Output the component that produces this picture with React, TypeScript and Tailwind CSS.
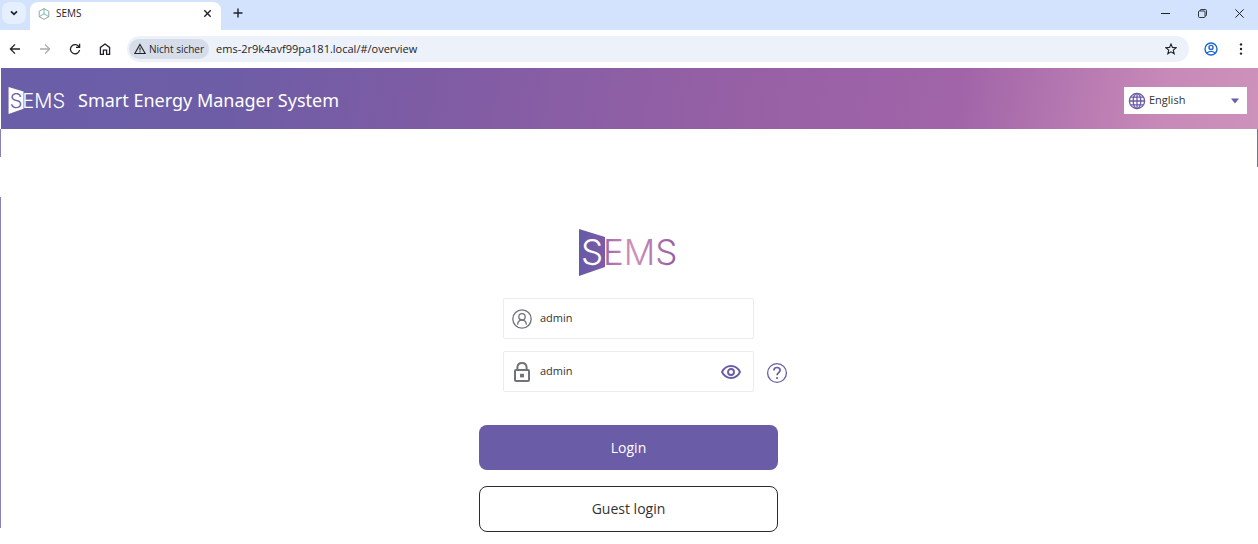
import React, { useState } from 'react'

interface ILogoProps {
  className?: string,
  id: string,
  light?: boolean
}

// SEMS wordmark, the first letter sits on a slanted panel
const SemsLogo = ({ className, id, light }: ILogoProps) => {
  return (
    <svg className={className} viewBox="0 0 99 47" overflow="visible" role="img" aria-label="SEMS logo">
      <defs>
        <linearGradient id={`${id}-text`} gradientUnits="userSpaceOnUse" x1="26" y1="0" x2="100" y2="0">
          <stop offset="0" stopColor="#a365a9" />
          <stop offset="0.38" stopColor="#cf93bb" />
          <stop offset="1" stopColor="#8f57a1" />
        </linearGradient>
        <linearGradient id={`${id}-panel`} x1="0" y1="0" x2="1" y2="0">
          <stop offset="0" stopColor="#655aa7" />
          <stop offset="1" stopColor="#7c5ba6" />
        </linearGradient>
      </defs>
      <path d="M0 0 L26 8 V38 L0 47 Z" fill={light ? '#fff' : `url(#${id}-panel)`} />
      <text x="2" y="36" fontFamily="Inter, Liberation Sans, sans-serif" fontWeight="300" fontSize="35" fill={light ? '#6d5ca6' : '#fff'}>S</text>
      <text x="24" y="36" fontFamily="Inter, Liberation Sans, sans-serif" fontWeight="300" fontSize="35" fill={light ? '#fff' : `url(#${id}-text)`}>EMS</text>
    </svg>
  )
}

const BrowserBar = () => {
  return (
    <div className="text-[#1f2328]">
      {/* Tab strip */}
      <div className="flex h-[30px] bg-[#d3e3fd]">
        <button aria-label="Search tabs" className="flex items-center justify-center w-6 h-[22px] mt-[2px] ml-[2px] rounded-lg bg-[#e6effd]">
          <svg className="w-2 h-2" viewBox="0 0 8 8" fill="none" stroke="currentColor" strokeWidth="1.7">
            <path d="M1 2.4 L4 5.4 L7 2.4" />
          </svg>
        </button>
        <div className="flex items-center w-[191px] h-7 mt-[2px] ml-1 pl-2 pr-[9px] pb-[5px] rounded-t-lg bg-white">
          <svg className="w-3 h-3 shrink-0" viewBox="0 0 12 12" fill="none" strokeWidth="0.9">
            <path stroke="#8b979b" d="M6 0.6 L10.8 3.3 V8.7 L6 11.4 L1.2 8.7 V3.3 Z" />
            <path stroke="#63b79b" d="M6 0.6 V5.8 L1.2 8.7 M6 5.8 L10.8 8.7" />
          </svg>
          <span className="ml-[6px] text-[10px]">SEMS</span>
          <button aria-label="Close tab" className="ml-auto">
            <svg className="w-[9px] h-[9px]" viewBox="0 0 9 9" stroke="currentColor" strokeWidth="1.4">
              <path d="M1.3 1.3 L7.7 7.7 M7.7 1.3 L1.3 7.7" />
            </svg>
          </button>
        </div>
        <button aria-label="New tab" className="ml-3 pb-1">
          <svg className="w-[10px] h-[10px]" viewBox="0 0 10 10" stroke="currentColor" strokeWidth="1.4">
            <path d="M5 0.5 V9.5 M0.5 5 H9.5" />
          </svg>
        </button>
        <div className="flex items-center gap-7 ml-auto mr-[14px] pb-1">
          <button aria-label="Minimize">
            <svg className="w-[9px] h-[9px]" viewBox="0 0 9 9" stroke="currentColor"><path d="M0 4.5 H9" /></svg>
          </button>
          <button aria-label="Restore">
            <svg className="w-[9px] h-[9px]" viewBox="0 0 9 9" fill="none" stroke="currentColor" strokeWidth="0.9">
              <rect x="0.5" y="2" width="6.5" height="6.5" rx="1" />
              <path d="M2.2 2 V1.4 Q2.2 0.5 3.1 0.5 H7.2 Q8.5 0.5 8.5 1.8 V5.9 Q8.5 6.8 7.6 6.8 H7" />
            </svg>
          </button>
          <button aria-label="Close window">
            <svg className="w-[9px] h-[9px]" viewBox="0 0 9 9" stroke="currentColor"><path d="M0.4 0.4 L8.6 8.6 M8.6 0.4 L0.4 8.6" /></svg>
          </button>
        </div>
      </div>

      {/* Address row */}
      <div className="flex items-center h-[38px] pl-[9px] pr-3 bg-white">
        <div className="flex items-center gap-[18px]">
          <button aria-label="Back">
            <svg className="w-3 h-3" viewBox="0 0 12 12" fill="none" stroke="currentColor" strokeWidth="1.3">
              <path d="M11 6 H1.5 M6 1.4 L1.4 6 L6 10.6" />
            </svg>
          </button>
          <button aria-label="Forward" className="text-[#a9acb0]">
            <svg className="w-3 h-3" viewBox="0 0 12 12" fill="none" stroke="currentColor" strokeWidth="1.3">
              <path d="M1 6 H10.5 M6 1.4 L10.6 6 L6 10.6" />
            </svg>
          </button>
          <button aria-label="Reload">
            <svg className="w-3 h-3" viewBox="0 0 12 12" fill="none" stroke="currentColor" strokeWidth="1.3">
              <path d="M10.2 4.2 A4.6 4.6 0 1 0 10.6 7 M10.6 0.8 V4.4 H7" />
            </svg>
          </button>
          <button aria-label="Home">
            <svg className="w-3 h-3" viewBox="0 0 12 12" fill="none" stroke="currentColor" strokeWidth="1.3">
              <path d="M1.4 11.3 V4.4 L6 1 L10.6 4.4 V11.3 H7.6 V7.2 H4.4 V11.3 Z" />
            </svg>
          </button>
        </div>
        <div className="flex flex-1 items-center h-[26px] ml-4 pl-[2px] pr-3 rounded-full bg-[#edf2fa]">
          <span className="flex items-center h-5 px-[5px] rounded-full bg-[#d7dde8] text-[10px] font-medium whitespace-nowrap">
            <svg className="w-3 h-3 mr-[3px]" viewBox="0 0 12 12" fill="none" stroke="currentColor" strokeWidth="1.1">
              <path d="M6 1.4 L11.2 10.5 H0.8 Z M6 4.5 V7.4 M6 8.2 V9.4" />
            </svg>
            Nicht sicher
          </span>
          <input
            aria-label="Address"
            className="flex-1 min-w-0 ml-[7px] bg-transparent text-[11px] outline-none"
            defaultValue="ems-2r9k4avf99pa181.local/#/overview"
          />
          <button aria-label="Bookmark this page">
            <svg className="w-3 h-3" viewBox="0 0 12 12" fill="none" stroke="currentColor" strokeWidth="1.1">
              <path d="M6 1 L7.4 4.4 L11.1 4.7 L8.3 7.1 L9.2 10.8 L6 8.8 L2.8 10.8 L3.7 7.1 L0.9 4.7 L4.6 4.4 Z" />
            </svg>
          </button>
        </div>
        <button aria-label="Profile" className="ml-[15px] text-[#1b66d2]">
          <svg className="w-[14px] h-[14px]" viewBox="0 0 14 14" fill="none" stroke="currentColor" strokeWidth="1.4">
            <circle cx="7" cy="7" r="6" />
            <circle cx="7" cy="5.4" r="2" />
            <path d="M2.8 11 Q7 7.8 11.2 11" />
          </svg>
        </button>
        <button aria-label="Menu" className="ml-[18px]">
          <svg className="w-[10px] h-[14px]" viewBox="0 0 10 14" fill="currentColor">
            <circle cx="5" cy="2.4" r="1.2" /><circle cx="5" cy="7" r="1.2" /><circle cx="5" cy="11.6" r="1.2" />
          </svg>
        </button>
      </div>
    </div>
  )
}

const Header = () => {
  return (
    <header className="flex items-center justify-between h-[61px] ml-px pt-1 pl-[7px] pr-[11px] bg-[linear-gradient(100deg,#6a5ea8_0%,#6d5da6_18%,#7e5ca4_34%,#9660a5_58%,#a164a8_76%,#c789b8_92%,#cd92bb_100%)]">
      <div className="flex items-center">
        <SemsLogo id="header" light className="w-[58px] h-[27px]" />
        <h1 className="ml-3 text-[18px] text-white font-['Noto_Sans',sans-serif]">Smart Energy Manager System</h1>
      </div>
      <div className="relative flex items-center w-[123px] h-[27px] bg-white">
        <svg className="absolute left-1 w-[18px] h-[18px] pointer-events-none" viewBox="0 0 18 18" fill="none" stroke="#6a5ca6" strokeWidth="1.3">
          <circle cx="9" cy="9" r="7.6" />
          <ellipse cx="9" cy="9" rx="3.8" ry="7.6" />
          <path d="M9 1.4 V16.6 M1.4 9 H16.6 M2.6 5.2 H15.4 M2.6 12.8 H15.4" />
        </svg>
        <select aria-label="Language" className="w-full h-full pl-[25px] appearance-none bg-transparent text-[11px] text-[#333] outline-none">
          <option>English</option>
          <option>Deutsch</option>
        </select>
        <svg className="absolute right-2 w-2 h-[6px] pointer-events-none" viewBox="0 0 8 6" fill="#6a5ca6">
          <path d="M0 0.5 H8 L4 5.5 Z" />
        </svg>
      </div>
    </header>
  )
}

const LoginForm = () => {
  const [visible, setVisible] = useState(true)

  return (
    <form className="flex flex-col items-center w-full" onSubmit={(e) => e.preventDefault()}>
      {/* User name */}
      <div className="flex items-center w-[251px] h-[41px] px-2 border border-[#ececee] rounded-xs">
        <svg className="w-5 h-5 shrink-0" viewBox="0 0 20 20" fill="none" stroke="#707377" strokeWidth="1.3">
          <circle cx="10" cy="10" r="9.2" />
          <circle cx="10" cy="7.8" r="3.2" />
          <path d="M5.6 15.6 C5.8 12.6 7.2 11.1 10 11.1 C12.8 11.1 14.2 12.6 14.4 15.6" />
        </svg>
        <input aria-label="User name" className="flex-1 min-w-0 ml-2 text-[11px] text-[#333] outline-none" type="text" defaultValue="admin" />
      </div>

      {/* Password */}
      <div className="grid grid-cols-[1fr_251px_1fr] items-center w-full mt-3">
        <div className="flex items-center col-start-2 h-[41px] pl-2 pr-3 border border-[#ececee] rounded-xs">
          <svg className="w-5 h-5 shrink-0" viewBox="0 0 20 20" fill="none" stroke="#707377" strokeWidth="2">
            <rect x="3" y="8" width="14" height="11" rx="1" />
            <path d="M5.4 8 V5.6 C5.4 2.8 7.2 1 10 1 C12.8 1 14.6 2.8 14.6 5.6 V8" />
            <rect x="8" y="11.8" width="4" height="3.6" fill="#707377" stroke="none" />
          </svg>
          <input
            aria-label="Password"
            className="flex-1 min-w-0 ml-2 text-[11px] text-[#333] outline-none"
            type={visible ? 'text' : 'password'}
            defaultValue="admin"
          />
          <button type="button" aria-label="Show password" onClick={() => setVisible(!visible)}>
            <svg className="w-5 h-[14px]" viewBox="0 0 20 14" fill="none" stroke="#6a5ca6" strokeWidth="1.9">
              <path d="M1 7 C3 3 6.2 1 10 1 C13.8 1 17 3 19 7 C17 11 13.8 13 10 13 C6.2 13 3 11 1 7 Z" />
              <circle cx="10" cy="7" r="3" />
            </svg>
          </button>
        </div>
        <button type="button" aria-label="Help" className="justify-self-start ml-3 mt-[2px]">
          <svg className="w-[22px] h-[22px]" viewBox="0 0 22 22" fill="none" stroke="#6a5ca6" strokeWidth="1.3">
            <circle cx="11" cy="11" r="9.4" />
            <path strokeWidth="1.7" d="M7.9 8.6 C7.9 6.6 9.2 5.5 11 5.5 C12.9 5.5 14.1 6.6 14.1 8.2 C14.1 10.5 11.1 10.6 11.1 13.2" />
            <circle cx="11.1" cy="16" r="1.1" fill="#6a5ca6" stroke="none" />
          </svg>
        </button>
      </div>

      <button type="submit" className="w-[299px] h-[45px] mt-[33px] rounded-lg bg-[#6a5ca6] text-sm text-white">
        Login
      </button>
      <button type="button" className="w-[299px] h-[46px] mt-4 rounded-lg border border-[#2b2b2b] text-sm text-[#333]">
        Guest login
      </button>
    </form>
  )
}

const App = () => {
  return (
    <div className="flex flex-col min-h-screen bg-white font-['Open_Sans','Noto_Sans',sans-serif]">
      <BrowserBar />
      <Header />
      <div className="flex flex-1">
        {/* Left edge */}
        <div className="flex flex-col w-px mb-4">
          <div className="h-7 bg-[#8b80b6]"></div>
          <div className="flex-1 mt-10 bg-[#8b80b6]"></div>
        </div>
        <main className="flex flex-col flex-1 items-center pt-[100px] pr-px pb-3">
          <SemsLogo id="login" className="w-[99px] h-[47px] mb-[22px]" />
          <LoginForm />
        </main>
        {/* Right edge */}
        <div className="w-px h-[38px] bg-[#77739a]"></div>
      </div>
    </div>
  )
}

export default App
